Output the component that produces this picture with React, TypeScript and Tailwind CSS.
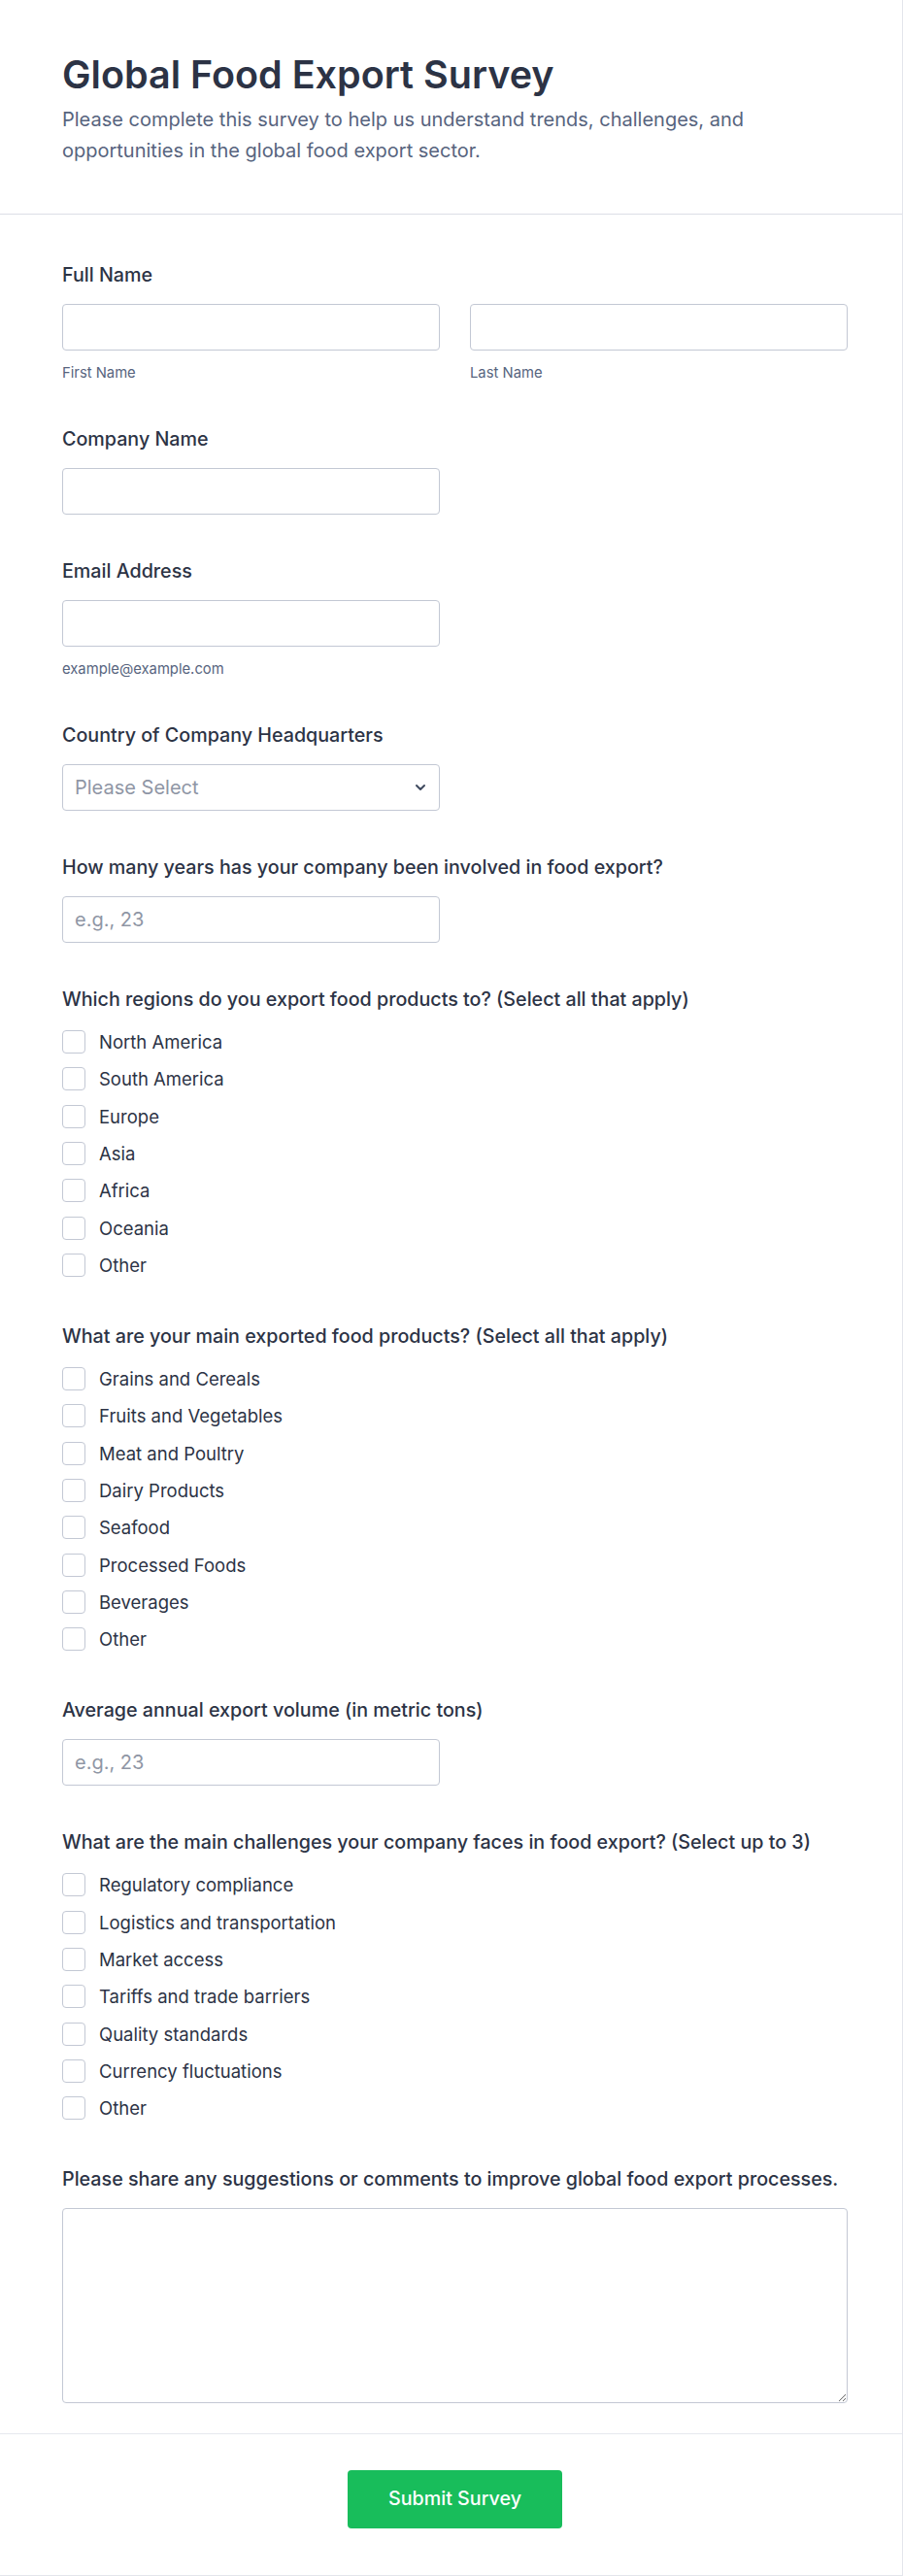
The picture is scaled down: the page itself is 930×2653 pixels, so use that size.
import { ChevronDown } from "lucide-react";

const font = { fontFamily: "Inter, 'Noto Sans', sans-serif" };

const regions = [
  "North America",
  "South America",
  "Europe",
  "Asia",
  "Africa",
  "Oceania",
  "Other",
];

const products = [
  "Grains and Cereals",
  "Fruits and Vegetables",
  "Meat and Poultry",
  "Dairy Products",
  "Seafood",
  "Processed Foods",
  "Beverages",
  "Other",
];

const challenges = [
  "Regulatory compliance",
  "Logistics and transportation",
  "Market access",
  "Tariffs and trade barriers",
  "Quality standards",
  "Currency fluctuations",
  "Other",
];

const inputClass =
  "h-12 w-full rounded border border-[#c3c8d4] bg-white px-3 text-[20px] text-[#2c3345] placeholder:text-[#8f96a5] outline-none";

const Label = ({ children }: { children: React.ReactNode }) => (
  <label className="mb-4 block whitespace-nowrap text-[19.7px] font-medium leading-7 text-[#2c3345]">
    {children}
  </label>
);

const SubLabel = ({ children }: { children: React.ReactNode }) => (
  <p className="mt-[13px] text-[14.8px] leading-5 text-[#57647e]">{children}</p>
);

const CheckList = ({ items }: { items: string[] }) => (
  <div className="flex flex-col gap-[10.33px] pb-px">
    {items.map((item) => (
      <label key={item} className="flex h-7 items-center gap-[14px]">
        <span className="h-6 w-6 shrink-0 rounded-[4px] border border-[#c3c8d4] bg-white" />
        <span className="text-[18.5px] leading-7 text-[#2c3345]">{item}</span>
      </label>
    ))}
  </div>
);

export default function App() {
  return (
    <div
      style={font}
      className="w-[930px] border-r border-b border-[#e3e5ec] bg-white"
    >
      <header className="border-b border-[#dcdee6] pl-16 pr-14 pt-[55px] pb-[49px]">
        <h1 className="text-[39.5px] font-semibold leading-[44px] text-[#2c3345]">
          Global Food Export Survey
        </h1>
        <p className="mt-2 text-[20px] leading-8 text-[#57647e]">
          Please complete this survey to help us understand trends, challenges,
          and opportunities in the global food export sector.
        </p>
      </header>

      <form className="flex flex-col gap-11 pl-16 pr-14 pt-12 pb-[31px]">
        <div>
          <Label>Full Name</Label>
          <div className="grid grid-cols-2 gap-[31px]">
            <div>
              <input className={inputClass} />
              <SubLabel>First Name</SubLabel>
            </div>
            <div>
              <input className={inputClass} />
              <SubLabel>Last Name</SubLabel>
            </div>
          </div>
        </div>

        <div>
          <Label>Company Name</Label>
          <div className="w-[389px]">
            <input className={inputClass} />
          </div>
        </div>

        <div>
          <Label>Email Address</Label>
          <div className="w-[389px]">
            <input type="email" className={inputClass} />
            <SubLabel>example@example.com</SubLabel>
          </div>
        </div>

        <div>
          <Label>Country of Company Headquarters</Label>
          <div className="relative w-[389px]">
            <select
              defaultValue=""
              className={`${inputClass} appearance-none text-[#8f96a5]`}
            >
              <option value="" disabled>
                Please Select
              </option>
            </select>
            <ChevronDown
              className="pointer-events-none absolute right-3 top-1/2 h-4 w-4 -translate-y-1/2 text-[#3f4a5f]"
              strokeWidth={3}
            />
          </div>
        </div>

        <div>
          <Label>How many years has your company been involved in food export?</Label>
          <div className="w-[389px]">
            <input className={inputClass} placeholder="e.g., 23" />
          </div>
        </div>

        <div>
          <Label>Which regions do you export food products to? (Select all that apply)</Label>
          <CheckList items={regions} />
        </div>

        <div>
          <Label>What are your main exported food products? (Select all that apply)</Label>
          <CheckList items={products} />
        </div>

        <div>
          <Label>Average annual export volume (in metric tons)</Label>
          <div className="w-[389px]">
            <input className={inputClass} placeholder="e.g., 23" />
          </div>
        </div>

        <div>
          <Label>What are the main challenges your company faces in food export? (Select up to 3)</Label>
          <CheckList items={challenges} />
        </div>

        <div>
          <Label>Please share any suggestions or comments to improve global food export processes.</Label>
          <textarea className="block h-[201px] w-full rounded border border-[#c3c8d4] bg-white p-3 text-[20px] text-[#2c3345] outline-none" />
        </div>
      </form>

      <footer className="flex justify-center border-t border-[#e6e8ee] pl-16 pr-14 pt-[37px] pb-12">
        <button
          type="button"
          className="h-[60px] w-[221px] rounded bg-[#18bd5b] text-[19.7px] font-medium text-white"
        >
          Submit Survey
        </button>
      </footer>
    </div>
  );
}
